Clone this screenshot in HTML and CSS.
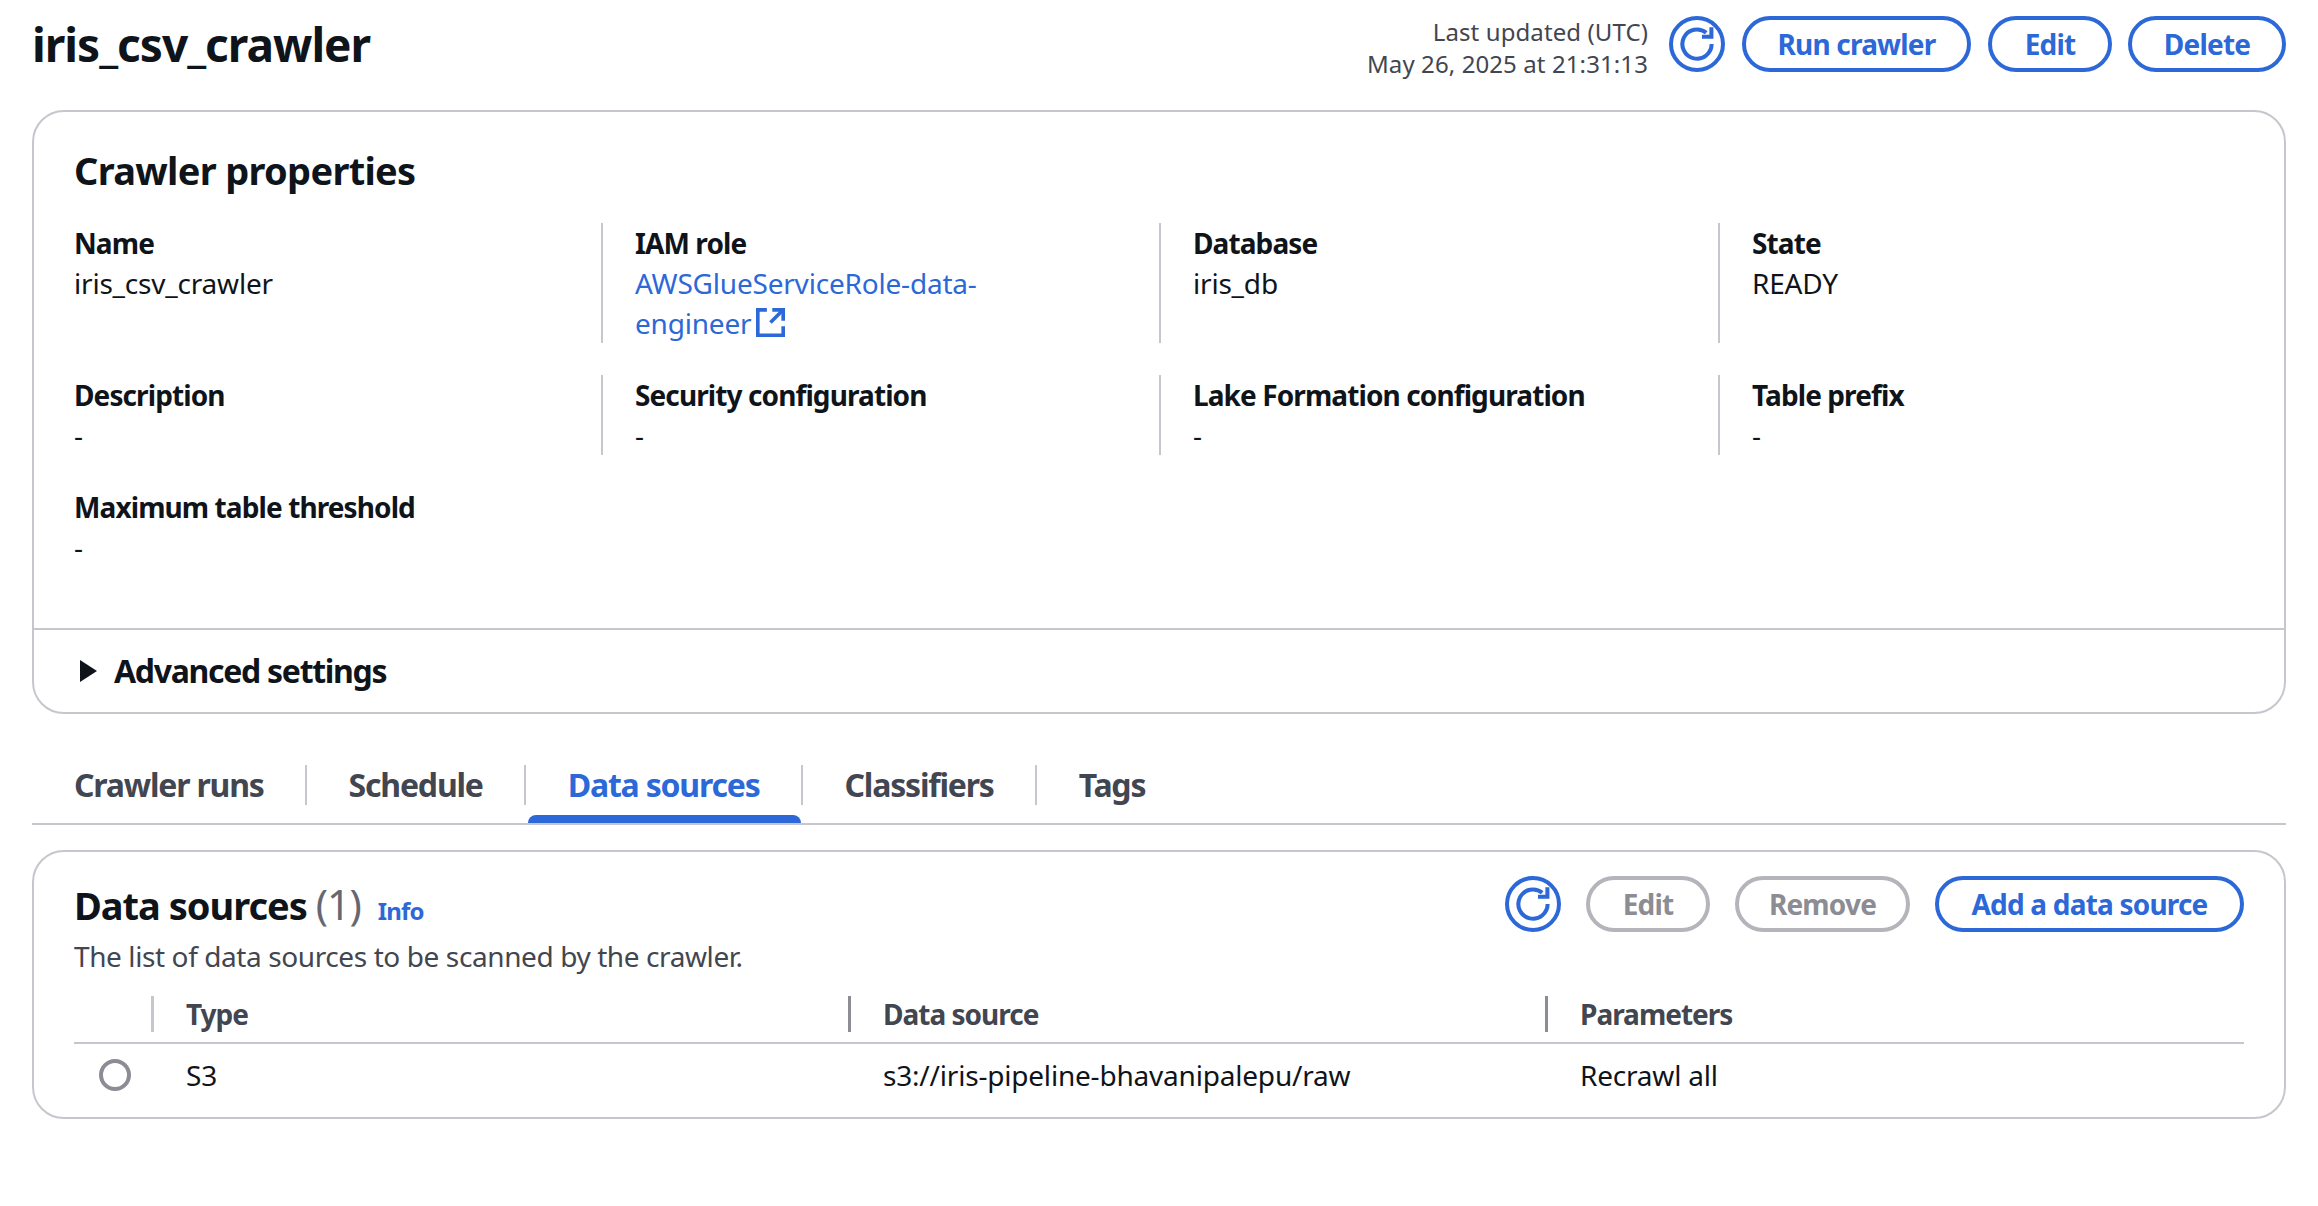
FILE: index.html
```html
<!DOCTYPE html>
<html lang="en">
<head>
  <meta charset="UTF-8">
  <title>iris_csv_crawler</title>
  <link rel="stylesheet" href="styles.css">
</head>
<body>
  <header class="page-header">
    <h1>iris_csv_crawler</h1>
    <div class="actions">
      <div class="updated">Last updated (UTC)<br>May 26, 2025 at 21:31:13</div>
      <button class="icon-btn" type="button" aria-label="Refresh">
        <svg viewBox="0 0 16 16"><path d="M14.5 8a6.5 6.5 0 1 1-2.4-5"/><path d="M14.4 .6v4.2h-4.2"/></svg>
      </button>
      <button class="btn run" type="button">Run crawler</button>
      <button class="btn edit" type="button">Edit</button>
      <button class="btn delete" type="button">Delete</button>
    </div>
  </header>

  <section class="card props">
    <h2>Crawler properties</h2>
    <div class="prop-grid">
      <div class="prop"><b>Name</b><span>iris_csv_crawler</span></div>
      <div class="prop"><b>IAM role</b><a href="#">AWSGlueServiceRole-data-<br>engineer <svg class="ext" viewBox="0 0 16 16"><path d="M6 1H1v14h14v-5"/><path d="M9 1h6v6"/><path d="M15 1 8 8"/></svg></a></div>
      <div class="prop"><b>Database</b><span>iris_db</span></div>
      <div class="prop"><b>State</b><span>READY</span></div>
      <div class="prop"><b>Description</b><span>-</span></div>
      <div class="prop"><b>Security configuration</b><span>-</span></div>
      <div class="prop"><b>Lake Formation configuration</b><span>-</span></div>
      <div class="prop"><b>Table prefix</b><span>-</span></div>
      <div class="prop"><b>Maximum table threshold</b><span>-</span></div>
    </div>
    <div class="advanced"><i class="caret"></i>Advanced settings</div>
  </section>

  <nav class="tabs">
    <a href="#"><span>Crawler runs</span></a>
    <a href="#"><span>Schedule</span></a>
    <a href="#" class="active"><span>Data sources</span></a>
    <a href="#"><span>Classifiers</span></a>
    <a href="#"><span>Tags</span></a>
  </nav>

  <section class="card sources">
    <div class="sources-head">
      <div>
        <h2>Data sources <em>(1)</em> <a href="#" class="info">Info</a></h2>
        <p>The list of data sources to be scanned by the crawler.</p>
      </div>
      <div class="actions wide">
        <button class="icon-btn" type="button" aria-label="Refresh">
          <svg viewBox="0 0 16 16"><path d="M14.5 8a6.5 6.5 0 1 1-2.4-5"/><path d="M14.4 .6v4.2h-4.2"/></svg>
        </button>
        <button class="btn off edit2" type="button">Edit</button>
        <button class="btn off remove" type="button">Remove</button>
        <button class="btn add" type="button">Add a data source</button>
      </div>
    </div>
    <table>
      <thead>
        <tr><th class="sel"></th><th class="light">Type</th><th>Data source</th><th>Parameters</th></tr>
      </thead>
      <tbody>
        <tr><td class="sel"><i class="radio"></i></td><td>S3</td><td>s3://iris-pipeline-bhavanipalepu/raw</td><td>Recrawl all</td></tr>
      </tbody>
    </table>
  </section>
</body>
</html>
```

FILE: styles.css
```css
* {
  box-sizing: border-box;
}

body {
  margin: 0;
  padding: 16px 32px 0 32px;
  font-family: "Noto Sans", sans-serif;
  font-size: 28px;
  line-height: 40px;
  letter-spacing: -0.2px;
  color: #0f141a;
  background-color: #ffffff;
}

a {
  color: #2c68d8;
  text-decoration: none;
}

h1, h2, p {
  margin: 0;
}

.page-header {
  display: flex;
  justify-content: space-between;
  height: 94px;
}

h1 {
  font-size: 46px;
  line-height: 56px;
  font-weight: 700;
  letter-spacing: -1px;
}

.actions {
  display: flex;
  align-items: flex-start;
  gap: 17px;
}

.updated {
  margin-right: 4px;
  font-size: 24px;
  line-height: 32px;
  letter-spacing: 0.1px;
  text-align: right;
  color: #424650;
}

.icon-btn {
  width: 56px;
  height: 56px;
  padding: 0;
  display: flex;
  align-items: center;
  justify-content: center;
  background: none;
  border: 4px solid #2c68d8;
  border-radius: 50%;
}

.icon-btn svg {
  width: 36px;
  height: 36px;
  fill: none;
  stroke: #2c68d8;
  stroke-width: 1.8;
}

.btn {
  height: 56px;
  padding: 0;
  font-family: inherit;
  font-size: 28px;
  font-weight: 700;
  letter-spacing: -0.8px;
  color: #2c68d8;
  background: none;
  border: 4px solid #2c68d8;
  border-radius: 28px;
}

.run { width: 229px; }
.edit { width: 124px; margin-right: -1px; }
.delete { width: 158px; }

.card {
  border: 2px solid #c6c6cd;
  border-radius: 32px;
}

.props {
  height: 604px;
  padding-top: 36px;
}

.props h2 {
  padding-left: 40px;
}

h2 {
  font-size: 38px;
  line-height: 44px;
  font-weight: 700;
  letter-spacing: -0.7px;
}

.prop-grid {
  display: grid;
  grid-template-columns: 527px 558px 559px 1fr;
  gap: 32px 0;
  margin: 31px 0 0 40px;
  height: 381px;
  align-content: start;
}

.prop {
  padding-left: 32px;
  border-left: 2px solid #c6c6cd;
}

.prop:nth-child(4n+1) {
  padding-left: 0;
  border-left: 0;
}

.prop b, .prop span, .prop a {
  display: block;
}

.prop b {
  font-weight: 700;
  letter-spacing: -0.9px;
}

.ext {
  width: 29px;
  height: 29px;
  vertical-align: -3px;
  margin-left: -2px;
  fill: none;
  stroke: #2c68d8;
  stroke-width: 2;
}

.advanced {
  display: flex;
  align-items: center;
  height: 84px;
  padding-left: 46px;
  margin-top: 24px;
  border-top: 2px solid #c6c6cd;
  font-size: 32px;
  font-weight: 700;
  letter-spacing: -1.3px;
}

.caret {
  width: 0;
  height: 0;
  margin-right: 17px;
  border-style: solid;
  border-width: 11px 0 11px 17px;
  border-color: transparent transparent transparent #0f141a;
}

.tabs {
  display: flex;
  height: 111px;
  padding: 51px 0 0 0;
  border-bottom: 2px solid #c6c6cd;
}

.tabs a {
  position: relative;
  height: 58px;
  font-size: 32px;
  font-weight: 700;
  letter-spacing: -1.2px;
  color: #424650;
}

.tabs span {
  display: block;
  height: 40px;
  padding: 0 41px 0 42px;
  border-right: 2px solid #c6c6cd;
}

.tabs a:last-child span {
  border-right: 0;
}

.tabs .active {
  color: #2c68d8;
}

.tabs .active::after {
  content: "";
  position: absolute;
  left: 2px;
  right: 2px;
  bottom: 0;
  height: 8px;
  background-color: #2c68d8;
  border-radius: 8px 8px 0 0;
}

.sources {
  height: 269px;
  margin-top: 25px;
  padding: 24px 40px 0;
}

.sources-head {
  display: flex;
  justify-content: space-between;
}

.sources h2 {
  margin-top: 6px;
  letter-spacing: -1px;
}

.sources h2 em {
  font-style: normal;
  font-weight: 400;
  font-size: 41px;
  color: #656871;
}

.info {
  margin-left: 8px;
  font-size: 24px;
  font-weight: 700;
  letter-spacing: -0.8px;
}

.sources p {
  margin-top: 3px;
  letter-spacing: -0.4px;
  color: #424650;
}

.wide {
  gap: 25px;
}

.off {
  color: #8c8c94;
  border-color: #b4b4bb;
}

.edit2 { width: 124px; }
.remove { width: 175px; }
.add { width: 309px; }

table {
  width: 2170px;
  margin-top: 20px;
  border-collapse: collapse;
  table-layout: fixed;
}

th {
  position: relative;
  height: 47px;
  padding: 0 0 10px 35px;
  line-height: 30px;
  text-align: left;
  font-weight: 700;
  letter-spacing: -1px;
  color: #424650;
  border-bottom: 2px solid #c6c6cd;
}

th::before {
  content: "";
  position: absolute;
  left: 0;
  top: 0;
  height: 36px;
  width: 3px;
  background-color: #8c8c94;
}

th.sel::before {
  display: none;
}

th.light::before {
  background-color: #c6c6cd;
}

th.sel, td.sel {
  width: 77px;
  padding: 0;
}

th:nth-child(2), td:nth-child(2) {
  width: 697px;
}

th:nth-child(3), td:nth-child(3) {
  width: 697px;
}

td {
  height: 62px;
  padding: 0 0 0 35px;
}

td.sel {
  padding-left: 25px;
}

.radio {
  display: block;
  width: 32px;
  height: 32px;
  border: 4px solid #8c8c94;
  border-radius: 50%;
}
```
